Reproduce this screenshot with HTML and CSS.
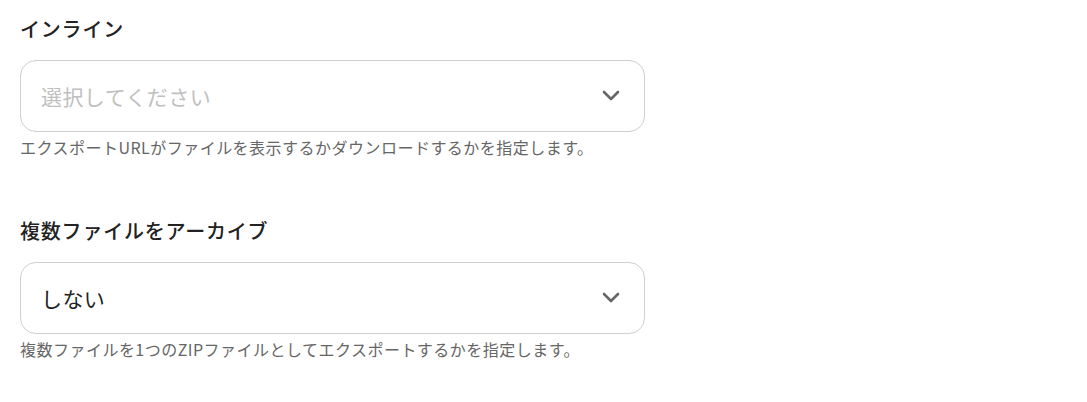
FILE: index.html
```html
<!DOCTYPE html>
<html lang="ja">
<head>
  <meta charset="UTF-8" />
  <meta name="viewport" content="width=device-width, initial-scale=1.0"/>
  <title>エクスポート設定</title>
  <link rel="stylesheet" href="styles.css">
</head>
<body>

<div class="field">
  <label class="field-label">インライン</label>
  <div class="select">
    <span class="select-value placeholder">選択してください</span>
    <svg class="chevron" viewBox="0 0 18 12" width="18" height="12">
      <path d="M2 2 L9 9 L16 2" />
    </svg>
  </div>
  <p class="field-help">エクスポートURLがファイルを表示するかダウンロードするかを指定します。</p>
</div>

<div class="field">
  <label class="field-label">複数ファイルをアーカイブ</label>
  <div class="select">
    <span class="select-value">しない</span>
    <svg class="chevron" viewBox="0 0 18 12" width="18" height="12">
      <path d="M2 2 L9 9 L16 2" />
    </svg>
  </div>
  <p class="field-help">複数ファイルを1つのZIPファイルとしてエクスポートするかを指定します。</p>
</div>

</body>
</html>
```

FILE: styles.css
```css
* {
  box-sizing: border-box;
}

body {
  font-family: "Noto Sans CJK JP", "Noto Sans", sans-serif;
  background-color: #ffffff;
  color: #222;
  margin: 0;
  padding: 14px 20px 0;
}

.field {
  width: 625px;
  margin-bottom: 58px;
}

.field-label {
  display: block;
  font-size: 20px;
  line-height: 30px;
  font-weight: 500;
  letter-spacing: 0.04em;
  margin-bottom: 16px;
}

.select {
  display: flex;
  align-items: center;
  justify-content: space-between;
  height: 72px;
  padding: 0 24px 0 20px;
  border: 1px solid #d0d0d0;
  border-radius: 16px;
  background-color: white;
}

.select-value {
  font-size: 21px;
  letter-spacing: 0.02em;
  color: #222;
}

.select-value.placeholder {
  color: #c0c0c0;
}

.chevron path {
  fill: none;
  stroke: #666;
  stroke-width: 2.6;
  stroke-linecap: round;
  stroke-linejoin: round;
}

.field-help {
  margin: 4px 0 0;
  font-size: 16px;
  line-height: 22px;
  letter-spacing: 0.03em;
  color: #666;
}
```
